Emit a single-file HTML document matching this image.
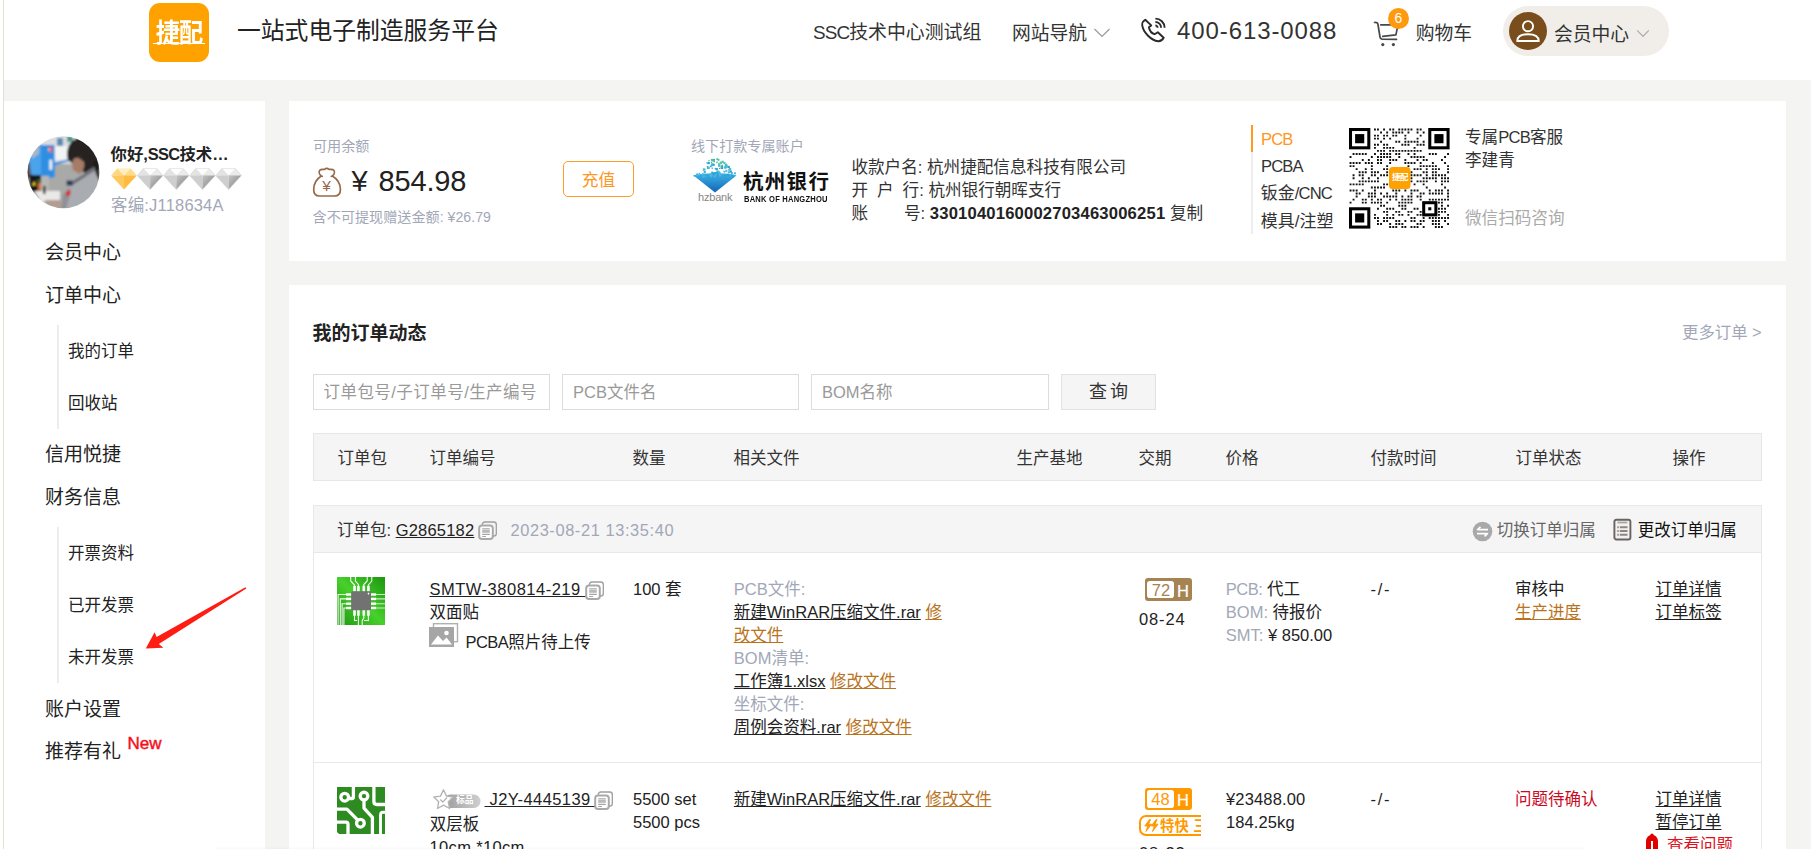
<!DOCTYPE html>
<html lang="zh-CN">
<head>
<meta charset="utf-8">
<title>会员中心 - 捷配</title>
<style>
*{box-sizing:border-box;margin:0;padding:0}
html,body{width:1811px;height:849px;overflow:hidden;background:#f4f4f2}
body{position:relative;font-family:"Liberation Sans","Noto Sans CJK SC",sans-serif;color:#222;font-size:16.5px}
.abs{position:absolute}
.t{position:absolute;white-space:nowrap;line-height:24px;height:24px}
.box{position:absolute}
u{text-underline-offset:1.400px;text-decoration-thickness:1px}
.g{color:#a2a7b7}
.br{color:#b9731c}
.red{color:#c4122f}
.or{color:#ff961e}
/* header */
#hdr{left:0;top:0;width:1811px;height:80px;background:#fff}
#lline{left:0;top:0;width:4px;height:849px;background:#fff;border-right:1px solid #e6dfd4}
#side{left:4px;top:101px;width:261px;height:748px;background:#fff}
#card1{left:289px;top:101px;width:1497px;height:160px;background:#fff}
#card2{left:289px;top:285px;width:1497px;height:564px;background:#fff}
.m1{font-size:19px;color:#222}
.m2{font-size:16.5px;color:#222}
.f16{font-size:16.5px}
.inp{position:absolute;top:374px;height:36px;border:1px solid #dcdcdc;background:#fff;font-size:16.5px;color:#999;line-height:34px;padding-left:10px;white-space:nowrap}
.th{position:absolute;top:446.200px;margin-left:.5px;font-size:16.5px;line-height:24px;color:#333;white-space:nowrap}
</style>
</head>
<body>
<div class="box" id="hdr"></div>
<div class="box" id="side"></div>
<div class="box" id="card1"></div>
<div class="box" id="card2"></div>
<div class="box" id="lline"></div>

<!-- ========== HEADER ========== -->
<div class="box" style="left:149px;top:3px;width:60px;height:59px;border-radius:11px;background:#ffa200"></div>
<div class="t" style="left:152px;top:17.800px;width:54px;text-align:center;font-size:25px;font-weight:bold;color:#fff;line-height:30px;height:30px;letter-spacing:-1px;transform:scale(.97,1.04)">捷配</div>
<div class="box" style="left:153px;top:42.500px;width:52px;height:1.500px;background:#fff"></div>
<div class="t" style="left:237px;top:17px;font-size:23.8px;line-height:28px;height:28px;color:#222">一站式电子制造服务平台</div>
<div class="t" style="left:813px;top:20.500px;font-size:18.9px;color:#333"><span style="letter-spacing:-.9px">SSC</span>技术中心测试组</div>
<div class="t" style="left:1012px;top:21.500px;font-size:18.8px;color:#333">网站导航</div>
<svg class="abs" style="left:1093px;top:26.500px" width="18" height="12" viewBox="0 0 18 12"><path d="M1.5 2 L9 9.5 L16.5 2" fill="none" stroke="#999" stroke-width="1.2"/></svg>
<svg class="abs" style="left:1140px;top:17px" width="27" height="27" viewBox="0 0 27 27"><g fill="none" stroke="#2a2a2a" stroke-width="1.900" stroke-linejoin="round"><path d="M5.300 2.700L11.200 8.400L8.900 10.300C9.500 13.500 12 16.500 14.600 17.200L17.800 15.200L23.700 20.800C22.500 23 20.500 24.300 18.200 24.200C11 23.500 3 15 2.200 8.100C2 6 3.500 3.800 5.300 2.700Z"/><path d="M15.400 1.600A9.200 9.200 0 0 1 24.600 10.700M15.400 5A5.700 5.700 0 0 1 21.100 10.700M15.400 8.500A2.200 2.200 0 0 1 17.600 10.700"/></g></svg>
<div class="t" style="left:1177px;top:16px;font-size:24px;line-height:30px;height:30px;color:#333;letter-spacing:.9px">400-613-0088</div>
<svg class="abs" style="left:1373px;top:19.500px" width="28" height="29" viewBox="0 0 28 29"><g fill="none" stroke="#484848" stroke-width="1.700" stroke-linecap="round" stroke-linejoin="round"><path d="M1.500 2.500C3.500 2.300 4.500 2.300 4.900 4L7 17C7.200 18.400 7.800 19.100 9 19.200L23.500 19.400"/><path d="M7.800 4.900H25L22.900 14.900L9.700 16.400"/></g><circle cx="9.800" cy="24.600" r="1.600" fill="#484848"/><circle cx="20.400" cy="24.600" r="1.600" fill="#484848"/></svg>
<div class="box" style="left:1388px;top:8px;width:21px;height:21px;border-radius:50%;background:#ff9a0e"></div>
<div class="t" style="left:1388px;top:8px;width:21px;text-align:center;font-size:14px;line-height:21px;height:21px;color:#fff">6</div>
<div class="t" style="left:1415.700px;top:22.200px;font-size:18.8px;color:#333">购物车</div>
<div class="box" style="left:1503px;top:6px;width:166px;height:50px;border-radius:25px;background:#f1eeea"></div>
<div class="box" style="left:1509px;top:12px;width:38px;height:38px;border-radius:50%;background:#7a4d1c"></div>
<svg class="abs" style="left:1509px;top:12px" width="38" height="38" viewBox="0 0 38 38"><g fill="none" stroke="#fff" stroke-width="1.900"><circle cx="19" cy="14.200" r="5.100"/><path d="M8.300 29 C8.300 24 12 22.200 19 22.200 C26 22.200 29.700 24 29.700 29 Z" stroke-linejoin="miter"/></g></svg>
<div class="t" style="left:1554px;top:22.900px;font-size:18.8px;color:#333">会员中心</div>
<svg class="abs" style="left:1635px;top:28px" width="16" height="11" viewBox="0 0 16 11"><path d="M2.200 2.400 L8 8.300 L13.800 2.400" fill="none" stroke="#aaa" stroke-width="1.2"/></svg>

<!-- ========== SIDEBAR ========== -->
<svg class="abs" style="left:26.400px;top:135px" width="74" height="74" viewBox="-1 -1 74 74">
<defs><clipPath id="avc"><circle cx="36.500" cy="36.200" r="36"/></clipPath><filter id="avb" x="-5%" y="-5%" width="110%" height="110%"><feGaussianBlur stdDeviation="1"/></filter></defs>
<g clip-path="url(#avc)"><g filter="url(#avb)">
<rect x="-2" y="-2" width="76" height="76" fill="#a9a9a8"/>
<rect x="14" y="-2" width="34" height="30" fill="#d9dde2"/>
<rect x="24" y="10" width="18" height="14" fill="#f2f3f5"/>
<path d="M26 27l16-4v2l-16 5z" fill="#3d8fd8"/>
<rect x="30" y="2" width="6" height="8" fill="#5a8bb0"/><rect x="40" y="0" width="6" height="6" fill="#4a9a8a"/>
<rect x="-2" y="26" width="8" height="16" fill="#5a4a48"/>
<path d="M2 22L14 9h13.500l.5 32-12.500 3L4 38z" fill="#2f8fe2"/>
<path d="M2 22L14 9v35L4 38z" fill="#4ba3ec"/>
<path d="M5 17l7-6.500v7L5 23z" fill="#a9b9c8"/>
<rect x="22.300" y="23.800" width="3" height="10" fill="#eef2f6"/>
<rect x="21.300" y="11.400" width="4.500" height="4.500" fill="#e8484a"/><rect x="21.300" y="12.800" width="2" height="1.600" fill="#fff"/>
<rect x="14" y="40" width="8" height="16" fill="#b5b5b3"/>
<rect x="2.500" y="39" width="11.500" height="16.500" fill="#16161a"/>
<path d="M4.500 49.500l3-4.500 1.500 4.500z" fill="#e8c81a"/><rect x="10.900" y="46.500" width="3" height="8" fill="#d9742a"/><circle cx="11.500" cy="44.500" r="1.100" fill="#2fae4a"/>
<path d="M8 55h25v10L14 66z" fill="#e9e9e8"/>
<rect x="16" y="50" width="2.500" height="8" fill="#333"/>
<path d="M18 64h16v9H20z" fill="#b39c92"/>
<path d="M41 24C38 12 44 2 54 2c10 0 19 10 19 24v22l-8-6-14-10z" fill="#282422"/>
<path d="M46 24c3-4 9-4 11 2 1 5-1 9-4 12l-7-4c-1-3-1-7 0-10z" fill="#a67c66"/>
<path d="M46.500 22c4-6 11-5 12 4l-3-1c-2-3-6-4-9-3z" fill="#2a2523"/>
<path d="M34 73l2-14 14-17 19-12 5 6v37z" fill="#a9acb1"/>
<path d="M41 48l27-17 1.500 2.500L44 50z" fill="#6d7076"/>
<path d="M34 73l2-14 6-7 2 3-5 18z" fill="#8e9196"/>
<rect x="39.600" y="44.500" width="6" height="5" fill="#2c3a5a"/>
<path d="M38.600 57l4-4 1 5-3.500 3z" fill="#d8262a"/>
<path d="M66 24c4 2 7 8 7 22l-4-8z" fill="#1c1816"/>
</g></g></svg>
<div class="t" style="left:110.500px;top:142px;font-size:16.4px;font-weight:bold;color:#222">你好,<span style="letter-spacing:-.7px">SSC</span>技术…</div>
<svg class="abs" style="left:111.200px;top:168px" width="134" height="23" viewBox="0 0 134 23"><defs><linearGradient id="dgr" x1="0" y1="0" x2="1" y2="1"><stop offset="0" stop-color="#c6c6c6"/><stop offset=".6" stop-color="#9a9a9a"/><stop offset="1" stop-color="#b5b5b5"/></linearGradient></defs><g transform="translate(0.0 0)"><path d="M6.500 .3L.2 7.600L13 7.200Z" fill="#ffd77c"/><path d="M19.500 .3L25.800 7.600L13 7.200Z" fill="#ffdc8a"/><path d="M6.500 .3H19.500L13 7.200Z" fill="#ffeec4"/><path d="M.2 7.600L13 7.200V21.600Z" fill="#ffc95f"/><path d="M25.800 7.600L13 7.200V21.600Z" fill="#ffbc40"/></g><g transform="translate(26.15 0)"><path d="M6.500 .3L.2 7.600L13 7.200Z" fill="#e3e3e3"/><path d="M19.500 .3L25.800 7.600L13 7.200Z" fill="#ebebeb"/><path d="M6.500 .3H19.500L13 7.200Z" fill="#fdfdfd"/><path d="M.2 7.600L13 7.200V21.600Z" fill="#cecece"/><path d="M25.800 7.600L13 7.200V21.600Z" fill="url(#dgr)"/><path d="M6.500 .3H19.500L25.800 7.600L13 21.600L.2 7.600Z" fill="none" stroke="#d2d2d2" stroke-width=".6"/></g><g transform="translate(52.3 0)"><path d="M6.500 .3L.2 7.600L13 7.200Z" fill="#e3e3e3"/><path d="M19.500 .3L25.800 7.600L13 7.200Z" fill="#ebebeb"/><path d="M6.500 .3H19.500L13 7.200Z" fill="#fdfdfd"/><path d="M.2 7.600L13 7.200V21.600Z" fill="#cecece"/><path d="M25.800 7.600L13 7.200V21.600Z" fill="url(#dgr)"/><path d="M6.500 .3H19.500L25.800 7.600L13 21.600L.2 7.600Z" fill="none" stroke="#d2d2d2" stroke-width=".6"/></g><g transform="translate(78.45 0)"><path d="M6.500 .3L.2 7.600L13 7.200Z" fill="#e3e3e3"/><path d="M19.500 .3L25.800 7.600L13 7.200Z" fill="#ebebeb"/><path d="M6.500 .3H19.500L13 7.200Z" fill="#fdfdfd"/><path d="M.2 7.600L13 7.200V21.600Z" fill="#cecece"/><path d="M25.800 7.600L13 7.200V21.600Z" fill="url(#dgr)"/><path d="M6.500 .3H19.500L25.800 7.600L13 21.600L.2 7.600Z" fill="none" stroke="#d2d2d2" stroke-width=".6"/></g><g transform="translate(104.6 0)"><path d="M6.500 .3L.2 7.600L13 7.200Z" fill="#e3e3e3"/><path d="M19.500 .3L25.800 7.600L13 7.200Z" fill="#ebebeb"/><path d="M6.500 .3H19.500L13 7.200Z" fill="#fdfdfd"/><path d="M.2 7.600L13 7.200V21.600Z" fill="#cecece"/><path d="M25.800 7.600L13 7.200V21.600Z" fill="url(#dgr)"/><path d="M6.500 .3H19.500L25.800 7.600L13 21.600L.2 7.600Z" fill="none" stroke="#d2d2d2" stroke-width=".6"/></g></svg>
<div class="t g" style="left:111px;top:193.300px;font-size:16.5px;letter-spacing:.18px">客编:J118634A</div>
<div class="t m1" style="left:45px;top:241px">会员中心</div>
<div class="t m1" style="left:45px;top:284px">订单中心</div>
<div class="box" style="left:57px;top:325px;width:2px;height:104px;background:#ededed"></div>
<div class="t m2" style="left:68px;top:339px">我的订单</div>
<div class="t m2" style="left:68px;top:391px">回收站</div>
<div class="t m1" style="left:45px;top:442.500px">信用悦捷</div>
<div class="t m1" style="left:45px;top:485.500px">财务信息</div>
<div class="box" style="left:57px;top:527px;width:2px;height:156px;background:#ededed"></div>
<div class="t m2" style="left:68px;top:541px">开票资料</div>
<div class="t m2" style="left:68px;top:593px">已开发票</div>
<div class="t m2" style="left:68px;top:645px">未开发票</div>
<svg class="abs" style="left:140px;top:582px" width="112" height="72" viewBox="140 582 112 72"><path d="M246.300 588.500 L245.400 587.300 L156.600 637.100 L154.600 632.200 L145.800 648.400 L163.400 647.700 L158.800 644.100 Z" fill="#ff1c12"/></svg>
<div class="t m1" style="left:45px;top:697.500px">账户设置</div>
<div class="t m1" style="left:45px;top:739.800px">推荐有礼</div>
<div class="t" style="left:127.500px;top:731.500px;font-size:17px;color:#f5101c;-webkit-text-stroke:.45px #f5101c">New</div>

<!-- ========== CARD1 ========== -->
<div class="t g" style="left:313px;top:134px;font-size:14.1px">可用余额</div>
<svg class="abs" style="left:312px;top:167px" width="30" height="31" viewBox="0 0 30 31"><path d="M10.300 9.300L9.300 9C7.500 7.500 6.400 5 7.800 3.200C9 1.800 11.500 2.700 12.800 2.200C13.800 1.100 15.800 1.100 16.800 2.200C18.100 2.700 20.600 1.800 21.800 3.200C23.200 5 22.100 7.500 20.300 9L19.300 9.300M20.300 9C25.500 12 28.400 17.500 28.400 22.500C28.400 27 26 29 22.500 29L7.500 29C4 29 1.700 27 1.700 22.500C1.700 17.500 4.500 12 9.300 9" fill="none" stroke="#96684a" stroke-width="1.700" stroke-linejoin="round" stroke-linecap="round"/></svg>
<div class="t" style="left:318.500px;top:177.500px;width:16px;text-align:center;font-size:15.500px;line-height:16px;height:16px;color:#96684a">¥</div>
<div class="t" style="left:351.500px;top:163px;font-size:29px;line-height:36px;height:36px;color:#222">¥</div><div class="t" style="left:378.500px;top:163px;font-size:29px;line-height:36px;height:36px;color:#222;letter-spacing:-.15px">854.98</div>
<div class="t g" style="left:312.500px;top:205px;font-size:14.15px">含不可提现赠送金额: ¥26.79</div>
<div class="box" style="left:563px;top:161px;width:71px;height:36px;border:1.400px solid #ff9d2b;border-radius:5px"></div>
<div class="t or" style="left:563px;top:169px;width:71px;text-align:center;font-size:16.800px">充值</div>
<div class="t g" style="left:691px;top:134px;font-size:14.1px">线下打款专属账户</div>
<svg class="abs" style="left:692px;top:157px" width="46" height="37" viewBox="0 0 46 37"><defs><linearGradient id="hzg" x1="0" y1="0" x2="0" y2="1"><stop offset="0" stop-color="#3cb4e4"/><stop offset="1" stop-color="#1464b8"/></linearGradient></defs><path d="M1.500 18.500C8 15.500 38 15.500 44.500 18.500L23 35.500z" fill="url(#hzg)"/><rect x="32.1" y="9.5" width="2.2" height="2.2" fill="#4db8e6"/><rect x="29.6" y="3.7" width="2.2" height="2.2" fill="#59c6a8"/><rect x="26.4" y="14.6" width="2.0" height="2.0" fill="#4db8e6"/><rect x="36.2" y="11.7" width="2.2" height="2.2" fill="#59c6a8"/><rect x="20.8" y="15.4" width="1.6" height="1.6" fill="#2aa3d9"/><rect x="31.3" y="4.9" width="2.2" height="2.2" fill="#59c6a8"/><rect x="26.0" y="16.0" width="2.2" height="2.2" fill="#4db8e6"/><rect x="38.5" y="17.7" width="1.6" height="1.6" fill="#2aa3d9"/><rect x="10.9" y="11.3" width="1.6" height="1.6" fill="#4db8e6"/><rect x="25.5" y="1.8" width="2.0" height="2.0" fill="#59c6a8"/><rect x="14.4" y="5.2" width="1.3" height="1.3" fill="#2aa3d9"/><rect x="32.8" y="6.6" width="2.2" height="2.2" fill="#4db8e6"/><rect x="30.5" y="16.6" width="1.3" height="1.3" fill="#4db8e6"/><rect x="28.6" y="8.8" width="1.6" height="1.6" fill="#3fb58f"/><rect x="19.6" y="6.5" width="2.2" height="2.2" fill="#3fb58f"/><rect x="11.6" y="11.6" width="2.0" height="2.0" fill="#4db8e6"/><rect x="31.4" y="13.7" width="1.3" height="1.3" fill="#4db8e6"/><rect x="26.0" y="7.6" width="2.0" height="2.0" fill="#3fb58f"/><rect x="30.7" y="18.1" width="1.6" height="1.6" fill="#4db8e6"/><rect x="26.3" y="7.1" width="2.2" height="2.2" fill="#4db8e6"/><rect x="14.8" y="18.2" width="1.6" height="1.6" fill="#2aa3d9"/><rect x="37.8" y="13.5" width="2.2" height="2.2" fill="#2aa3d9"/><rect x="19.6" y="2.1" width="1.3" height="1.3" fill="#59c6a8"/><rect x="39.2" y="15.3" width="1.6" height="1.6" fill="#2aa3d9"/><rect x="4.5" y="16.5" width="2.0" height="2.0" fill="#4db8e6"/><rect x="20.9" y="1.9" width="1.3" height="1.3" fill="#59c6a8"/><rect x="19.0" y="6.7" width="2.0" height="2.0" fill="#2aa3d9"/><rect x="27.0" y="10.7" width="1.3" height="1.3" fill="#3fb58f"/><rect x="28.7" y="9.9" width="2.2" height="2.2" fill="#3fb58f"/><rect x="18.9" y="4.9" width="1.3" height="1.3" fill="#3fb58f"/><rect x="35.7" y="14.2" width="2.2" height="2.2" fill="#4db8e6"/><rect x="20.9" y="2.1" width="1.6" height="1.6" fill="#3fb58f"/><rect x="37.0" y="11.0" width="2.2" height="2.2" fill="#4db8e6"/><rect x="11.7" y="13.9" width="2.0" height="2.0" fill="#2aa3d9"/><rect x="38.3" y="17.8" width="2.0" height="2.0" fill="#4db8e6"/><rect x="24.2" y="4.6" width="1.6" height="1.6" fill="#59c6a8"/><rect x="22.1" y="18.8" width="1.6" height="1.6" fill="#4db8e6"/><rect x="21.5" y="18.3" width="1.6" height="1.6" fill="#4db8e6"/><rect x="19.5" y="2.2" width="2.0" height="2.0" fill="#3fb58f"/><rect x="15.0" y="9.7" width="2.2" height="2.2" fill="#2aa3d9"/><rect x="26.3" y="5.9" width="1.3" height="1.3" fill="#3fb58f"/><rect x="33.3" y="12.8" width="2.0" height="2.0" fill="#4db8e6"/><rect x="23.8" y="11.2" width="2.2" height="2.2" fill="#2aa3d9"/><rect x="31.8" y="14.1" width="1.6" height="1.6" fill="#4db8e6"/><rect x="18.0" y="8.6" width="1.6" height="1.6" fill="#2aa3d9"/><rect x="4.0" y="16.7" width="2.0" height="2.0" fill="#4db8e6"/><rect x="20.9" y="7.0" width="1.3" height="1.3" fill="#4db8e6"/><rect x="15.1" y="5.9" width="1.3" height="1.3" fill="#59c6a8"/><rect x="25.4" y="13.6" width="2.2" height="2.2" fill="#59c6a8"/><rect x="21.4" y="3.6" width="1.6" height="1.6" fill="#3fb58f"/><rect x="17.6" y="16.6" width="2.0" height="2.0" fill="#4db8e6"/><rect x="17.8" y="18.1" width="2.0" height="2.0" fill="#4db8e6"/><rect x="21.3" y="1.9" width="1.6" height="1.6" fill="#3fb58f"/><rect x="38.7" y="17.8" width="2.2" height="2.2" fill="#2aa3d9"/><rect x="19.5" y="15.2" width="1.6" height="1.6" fill="#2aa3d9"/><rect x="19.3" y="14.6" width="1.6" height="1.6" fill="#2aa3d9"/><rect x="20.9" y="16.3" width="2.0" height="2.0" fill="#2aa3d9"/><rect x="28.0" y="4.8" width="1.6" height="1.6" fill="#3fb58f"/><rect x="14.8" y="9.0" width="1.3" height="1.3" fill="#2aa3d9"/><rect x="15.7" y="4.9" width="2.2" height="2.2" fill="#2aa3d9"/><rect x="27.0" y="17.4" width="2.0" height="2.0" fill="#4db8e6"/><rect x="14.3" y="17.8" width="1.6" height="1.6" fill="#2aa3d9"/><rect x="14.6" y="18.9" width="1.3" height="1.3" fill="#4db8e6"/><rect x="39.2" y="15.5" width="1.3" height="1.3" fill="#4db8e6"/><rect x="33.8" y="8.1" width="1.6" height="1.6" fill="#3fb58f"/><rect x="25.1" y="16.0" width="1.6" height="1.6" fill="#2aa3d9"/><rect x="22.3" y="15.0" width="2.0" height="2.0" fill="#2aa3d9"/><rect x="31.5" y="17.5" width="2.2" height="2.2" fill="#2aa3d9"/><rect x="6.8" y="15.8" width="1.3" height="1.3" fill="#4db8e6"/><rect x="18.8" y="7.1" width="2.2" height="2.2" fill="#4db8e6"/><rect x="18.9" y="1.9" width="1.6" height="1.6" fill="#3fb58f"/><rect x="10.5" y="18.4" width="2.2" height="2.2" fill="#4db8e6"/><rect x="34.8" y="16.9" width="2.2" height="2.2" fill="#2aa3d9"/><rect x="16.3" y="3.0" width="1.3" height="1.3" fill="#59c6a8"/><rect x="29.6" y="7.6" width="1.3" height="1.3" fill="#3fb58f"/><rect x="15.4" y="18.9" width="2.2" height="2.2" fill="#2aa3d9"/><rect x="12.2" y="14.5" width="1.6" height="1.6" fill="#59c6a8"/><rect x="24.6" y="17.8" width="2.2" height="2.2" fill="#2aa3d9"/><rect x="32.7" y="8.4" width="2.2" height="2.2" fill="#2aa3d9"/><rect x="1.6" y="18.2" width="1.3" height="1.3" fill="#2aa3d9"/><rect x="40.0" y="18.6" width="2.0" height="2.0" fill="#2aa3d9"/><rect x="36.5" y="9.5" width="1.6" height="1.6" fill="#4db8e6"/><rect x="33.3" y="9.3" width="2.0" height="2.0" fill="#59c6a8"/><rect x="24.4" y="1.3" width="1.6" height="1.6" fill="#3fb58f"/><rect x="27.7" y="4.7" width="2.2" height="2.2" fill="#59c6a8"/><rect x="22.7" y="10.9" width="1.6" height="1.6" fill="#2aa3d9"/><rect x="29.2" y="10.0" width="2.0" height="2.0" fill="#2aa3d9"/><rect x="29.2" y="8.4" width="2.0" height="2.0" fill="#3fb58f"/><rect x="27.0" y="15.7" width="2.2" height="2.2" fill="#4db8e6"/><rect x="21.2" y="15.5" width="1.6" height="1.6" fill="#2aa3d9"/><rect x="15.6" y="9.7" width="2.2" height="2.2" fill="#59c6a8"/><rect x="29.4" y="18.3" width="1.6" height="1.6" fill="#2aa3d9"/><rect x="18.5" y="17.9" width="1.3" height="1.3" fill="#4db8e6"/><rect x="20.7" y="6.7" width="2.0" height="2.0" fill="#2aa3d9"/><rect x="22.8" y="17.2" width="1.6" height="1.6" fill="#4db8e6"/><rect x="10.7" y="12.4" width="1.3" height="1.3" fill="#59c6a8"/><rect x="35.4" y="8.8" width="2.2" height="2.2" fill="#2aa3d9"/><rect x="19.6" y="10.6" width="1.3" height="1.3" fill="#2aa3d9"/><rect x="19.1" y="2.4" width="2.0" height="2.0" fill="#59c6a8"/><rect x="33.3" y="7.4" width="2.2" height="2.2" fill="#4db8e6"/><rect x="24.1" y="14.3" width="2.2" height="2.2" fill="#2aa3d9"/><rect x="10.0" y="16.3" width="1.6" height="1.6" fill="#4db8e6"/><rect x="42.0" y="15.3" width="2.0" height="2.0" fill="#4db8e6"/></svg>
<div class="t" style="left:698px;top:190px;font-size:11px;line-height:14px;height:14px;color:#858585;letter-spacing:-.2px">hzbank</div>
<div class="t" style="left:743px;top:168.400px;font-size:20.500px;font-weight:bold;line-height:28px;height:28px;color:#111;letter-spacing:1.300px">杭州银行</div>
<div class="t" style="left:743.500px;top:193.500px;font-size:8.600px;font-weight:bold;line-height:11px;height:11px;color:#111;letter-spacing:.25px;transform-origin:left center;transform:scaleX(.88)">BANK OF HANGZHOU</div>
<div class="t" style="left:851.400px;top:156.400px;font-size:16.600px;color:#333">收款户名: 杭州捷配信息科技有限公司</div>
<div class="t" style="left:851.400px;top:179.400px;font-size:16.600px;color:#333">开<span style="display:inline-block;width:9px"></span>户<span style="display:inline-block;width:9px"></span>行: 杭州银行朝晖支行</div>
<div class="t" style="left:851.400px;top:202.400px;font-size:16.600px;color:#333">账</div>
<div class="t" style="left:904px;top:202.400px;font-size:16.600px;color:#333">号: <b style="color:#222;letter-spacing:.19px">3301040160002703463006251</b> 复制</div>
<div class="box" style="left:1251px;top:125px;width:2px;height:109px;background:#eee"></div>
<div class="box" style="left:1251px;top:125px;width:2px;height:27px;background:#ff9a1e"></div>
<div class="t or" style="left:1261px;top:128px;font-size:16.600px;letter-spacing:-.9px">PCB</div>
<div class="t" style="left:1261px;top:155.200px;font-size:16.600px;color:#333;letter-spacing:-.9px">PCBA</div>
<div class="t" style="left:1260.700px;top:182.300px;font-size:17px;color:#333">钣金<span style="letter-spacing:-.8px;font-size:16.600px">/CNC</span></div>
<div class="t" style="left:1260.700px;top:209.500px;font-size:17px;color:#333">模具/注塑</div>
<svg class="abs" style="left:1349px;top:128px" width="101" height="101" viewBox="0 0 101 101"><rect x="1.52" y="1.52" width="18.29" height="18.29" fill="none" stroke="#000" stroke-width="3.05"/><rect x="6.10" y="6.10" width="9.15" height="9.15" fill="#000"/><rect x="80.78" y="1.52" width="18.29" height="18.29" fill="none" stroke="#000" stroke-width="3.05"/><rect x="85.36" y="6.10" width="9.15" height="9.15" fill="#000"/><rect x="1.52" y="80.78" width="18.29" height="18.29" fill="none" stroke="#000" stroke-width="3.05"/><rect x="6.10" y="85.36" width="9.15" height="9.15" fill="#000"/><rect x="74.69" y="74.69" width="12.19" height="12.19" fill="none" stroke="#000" stroke-width="3.05"/><rect x="79.26" y="79.26" width="3.05" height="3.05" fill="#000"/><path d="M25.0 0.6h1.9v1.9h-1.9zM28.0 0.6h1.9v1.9h-1.9zM34.1 0.6h1.9v1.9h-1.9zM40.2 0.6h1.9v1.9h-1.9zM43.3 0.6h1.9v1.9h-1.9zM49.3 0.6h1.9v1.9h-1.9zM52.4 0.6h1.9v1.9h-1.9zM55.4 0.6h1.9v1.9h-1.9zM58.5 0.6h1.9v1.9h-1.9zM61.5 0.6h1.9v1.9h-1.9zM67.6 0.6h1.9v1.9h-1.9zM70.7 0.6h1.9v1.9h-1.9zM31.1 3.6h1.9v1.9h-1.9zM37.2 3.6h1.9v1.9h-1.9zM43.3 3.6h1.9v1.9h-1.9zM46.3 3.6h1.9v1.9h-1.9zM49.3 3.6h1.9v1.9h-1.9zM52.4 3.6h1.9v1.9h-1.9zM58.5 3.6h1.9v1.9h-1.9zM67.6 3.6h1.9v1.9h-1.9zM73.7 3.6h1.9v1.9h-1.9zM25.0 6.7h1.9v1.9h-1.9zM28.0 6.7h1.9v1.9h-1.9zM34.1 6.7h1.9v1.9h-1.9zM37.2 6.7h1.9v1.9h-1.9zM43.3 6.7h1.9v1.9h-1.9zM46.3 6.7h1.9v1.9h-1.9zM55.4 6.7h1.9v1.9h-1.9zM70.7 6.7h1.9v1.9h-1.9zM25.0 9.7h1.9v1.9h-1.9zM28.0 9.7h1.9v1.9h-1.9zM34.1 9.7h1.9v1.9h-1.9zM40.2 9.7h1.9v1.9h-1.9zM55.4 9.7h1.9v1.9h-1.9zM67.6 9.7h1.9v1.9h-1.9zM31.1 12.8h1.9v1.9h-1.9zM46.3 12.8h1.9v1.9h-1.9zM49.3 12.8h1.9v1.9h-1.9zM55.4 12.8h1.9v1.9h-1.9zM58.5 12.8h1.9v1.9h-1.9zM61.5 12.8h1.9v1.9h-1.9zM64.6 12.8h1.9v1.9h-1.9zM67.6 12.8h1.9v1.9h-1.9zM73.7 12.8h1.9v1.9h-1.9zM25.0 15.8h1.9v1.9h-1.9zM28.0 15.8h1.9v1.9h-1.9zM34.1 15.8h1.9v1.9h-1.9zM37.2 15.8h1.9v1.9h-1.9zM52.4 15.8h1.9v1.9h-1.9zM55.4 15.8h1.9v1.9h-1.9zM58.5 15.8h1.9v1.9h-1.9zM67.6 15.8h1.9v1.9h-1.9zM70.7 15.8h1.9v1.9h-1.9zM73.7 15.8h1.9v1.9h-1.9zM25.0 18.9h1.9v1.9h-1.9zM34.1 18.9h1.9v1.9h-1.9zM37.2 18.9h1.9v1.9h-1.9zM40.2 18.9h1.9v1.9h-1.9zM43.3 18.9h1.9v1.9h-1.9zM64.6 18.9h1.9v1.9h-1.9zM28.0 21.9h1.9v1.9h-1.9zM31.1 21.9h1.9v1.9h-1.9zM34.1 21.9h1.9v1.9h-1.9zM40.2 21.9h1.9v1.9h-1.9zM43.3 21.9h1.9v1.9h-1.9zM46.3 21.9h1.9v1.9h-1.9zM49.3 21.9h1.9v1.9h-1.9zM52.4 21.9h1.9v1.9h-1.9zM55.4 21.9h1.9v1.9h-1.9zM58.5 21.9h1.9v1.9h-1.9zM61.5 21.9h1.9v1.9h-1.9zM64.6 21.9h1.9v1.9h-1.9zM67.6 21.9h1.9v1.9h-1.9zM70.7 21.9h1.9v1.9h-1.9zM3.6 25.0h1.9v1.9h-1.9zM6.7 25.0h1.9v1.9h-1.9zM9.7 25.0h1.9v1.9h-1.9zM12.8 25.0h1.9v1.9h-1.9zM15.8 25.0h1.9v1.9h-1.9zM25.0 25.0h1.9v1.9h-1.9zM31.1 25.0h1.9v1.9h-1.9zM34.1 25.0h1.9v1.9h-1.9zM37.2 25.0h1.9v1.9h-1.9zM40.2 25.0h1.9v1.9h-1.9zM46.3 25.0h1.9v1.9h-1.9zM49.3 25.0h1.9v1.9h-1.9zM58.5 25.0h1.9v1.9h-1.9zM64.6 25.0h1.9v1.9h-1.9zM79.8 25.0h1.9v1.9h-1.9zM82.9 25.0h1.9v1.9h-1.9zM85.9 25.0h1.9v1.9h-1.9zM98.1 25.0h1.9v1.9h-1.9zM0.6 28.0h1.9v1.9h-1.9zM21.9 28.0h1.9v1.9h-1.9zM28.0 28.0h1.9v1.9h-1.9zM31.1 28.0h1.9v1.9h-1.9zM34.1 28.0h1.9v1.9h-1.9zM37.2 28.0h1.9v1.9h-1.9zM40.2 28.0h1.9v1.9h-1.9zM49.3 28.0h1.9v1.9h-1.9zM61.5 28.0h1.9v1.9h-1.9zM64.6 28.0h1.9v1.9h-1.9zM67.6 28.0h1.9v1.9h-1.9zM70.7 28.0h1.9v1.9h-1.9zM73.7 28.0h1.9v1.9h-1.9zM95.1 28.0h1.9v1.9h-1.9zM12.8 31.1h1.9v1.9h-1.9zM18.9 31.1h1.9v1.9h-1.9zM28.0 31.1h1.9v1.9h-1.9zM31.1 31.1h1.9v1.9h-1.9zM40.2 31.1h1.9v1.9h-1.9zM43.3 31.1h1.9v1.9h-1.9zM46.3 31.1h1.9v1.9h-1.9zM55.4 31.1h1.9v1.9h-1.9zM67.6 31.1h1.9v1.9h-1.9zM73.7 31.1h1.9v1.9h-1.9zM76.8 31.1h1.9v1.9h-1.9zM92.0 31.1h1.9v1.9h-1.9zM0.6 34.1h1.9v1.9h-1.9zM3.6 34.1h1.9v1.9h-1.9zM6.7 34.1h1.9v1.9h-1.9zM9.7 34.1h1.9v1.9h-1.9zM15.8 34.1h1.9v1.9h-1.9zM18.9 34.1h1.9v1.9h-1.9zM21.9 34.1h1.9v1.9h-1.9zM28.0 34.1h1.9v1.9h-1.9zM31.1 34.1h1.9v1.9h-1.9zM40.2 34.1h1.9v1.9h-1.9zM55.4 34.1h1.9v1.9h-1.9zM58.5 34.1h1.9v1.9h-1.9zM61.5 34.1h1.9v1.9h-1.9zM64.6 34.1h1.9v1.9h-1.9zM70.7 34.1h1.9v1.9h-1.9zM82.9 34.1h1.9v1.9h-1.9zM95.1 34.1h1.9v1.9h-1.9zM0.6 37.2h1.9v1.9h-1.9zM3.6 37.2h1.9v1.9h-1.9zM21.9 37.2h1.9v1.9h-1.9zM37.2 37.2h1.9v1.9h-1.9zM58.5 37.2h1.9v1.9h-1.9zM70.7 37.2h1.9v1.9h-1.9zM73.7 37.2h1.9v1.9h-1.9zM76.8 37.2h1.9v1.9h-1.9zM79.8 37.2h1.9v1.9h-1.9zM82.9 37.2h1.9v1.9h-1.9zM85.9 37.2h1.9v1.9h-1.9zM98.1 37.2h1.9v1.9h-1.9zM6.7 40.2h1.9v1.9h-1.9zM15.8 40.2h1.9v1.9h-1.9zM21.9 40.2h1.9v1.9h-1.9zM34.1 40.2h1.9v1.9h-1.9zM37.2 40.2h1.9v1.9h-1.9zM64.6 40.2h1.9v1.9h-1.9zM67.6 40.2h1.9v1.9h-1.9zM70.7 40.2h1.9v1.9h-1.9zM76.8 40.2h1.9v1.9h-1.9zM82.9 40.2h1.9v1.9h-1.9zM85.9 40.2h1.9v1.9h-1.9zM89.0 40.2h1.9v1.9h-1.9zM98.1 40.2h1.9v1.9h-1.9zM9.7 43.3h1.9v1.9h-1.9zM12.8 43.3h1.9v1.9h-1.9zM15.8 43.3h1.9v1.9h-1.9zM21.9 43.3h1.9v1.9h-1.9zM25.0 43.3h1.9v1.9h-1.9zM28.0 43.3h1.9v1.9h-1.9zM37.2 43.3h1.9v1.9h-1.9zM61.5 43.3h1.9v1.9h-1.9zM73.7 43.3h1.9v1.9h-1.9zM76.8 43.3h1.9v1.9h-1.9zM82.9 43.3h1.9v1.9h-1.9zM85.9 43.3h1.9v1.9h-1.9zM98.1 43.3h1.9v1.9h-1.9zM3.6 46.3h1.9v1.9h-1.9zM9.7 46.3h1.9v1.9h-1.9zM12.8 46.3h1.9v1.9h-1.9zM21.9 46.3h1.9v1.9h-1.9zM25.0 46.3h1.9v1.9h-1.9zM31.1 46.3h1.9v1.9h-1.9zM34.1 46.3h1.9v1.9h-1.9zM37.2 46.3h1.9v1.9h-1.9zM61.5 46.3h1.9v1.9h-1.9zM64.6 46.3h1.9v1.9h-1.9zM67.6 46.3h1.9v1.9h-1.9zM70.7 46.3h1.9v1.9h-1.9zM76.8 46.3h1.9v1.9h-1.9zM82.9 46.3h1.9v1.9h-1.9zM85.9 46.3h1.9v1.9h-1.9zM89.0 46.3h1.9v1.9h-1.9zM92.0 46.3h1.9v1.9h-1.9zM95.1 46.3h1.9v1.9h-1.9zM3.6 49.3h1.9v1.9h-1.9zM12.8 49.3h1.9v1.9h-1.9zM18.9 49.3h1.9v1.9h-1.9zM28.0 49.3h1.9v1.9h-1.9zM61.5 49.3h1.9v1.9h-1.9zM73.7 49.3h1.9v1.9h-1.9zM76.8 49.3h1.9v1.9h-1.9zM79.8 49.3h1.9v1.9h-1.9zM82.9 49.3h1.9v1.9h-1.9zM85.9 49.3h1.9v1.9h-1.9zM92.0 49.3h1.9v1.9h-1.9zM95.1 49.3h1.9v1.9h-1.9zM98.1 49.3h1.9v1.9h-1.9zM9.7 52.4h1.9v1.9h-1.9zM12.8 52.4h1.9v1.9h-1.9zM15.8 52.4h1.9v1.9h-1.9zM18.9 52.4h1.9v1.9h-1.9zM21.9 52.4h1.9v1.9h-1.9zM25.0 52.4h1.9v1.9h-1.9zM28.0 52.4h1.9v1.9h-1.9zM61.5 52.4h1.9v1.9h-1.9zM67.6 52.4h1.9v1.9h-1.9zM70.7 52.4h1.9v1.9h-1.9zM73.7 52.4h1.9v1.9h-1.9zM76.8 52.4h1.9v1.9h-1.9zM85.9 52.4h1.9v1.9h-1.9zM92.0 52.4h1.9v1.9h-1.9zM95.1 52.4h1.9v1.9h-1.9zM98.1 52.4h1.9v1.9h-1.9zM0.6 55.4h1.9v1.9h-1.9zM3.6 55.4h1.9v1.9h-1.9zM6.7 55.4h1.9v1.9h-1.9zM9.7 55.4h1.9v1.9h-1.9zM12.8 55.4h1.9v1.9h-1.9zM34.1 55.4h1.9v1.9h-1.9zM37.2 55.4h1.9v1.9h-1.9zM64.6 55.4h1.9v1.9h-1.9zM73.7 55.4h1.9v1.9h-1.9zM92.0 55.4h1.9v1.9h-1.9zM21.9 58.5h1.9v1.9h-1.9zM25.0 58.5h1.9v1.9h-1.9zM28.0 58.5h1.9v1.9h-1.9zM31.1 58.5h1.9v1.9h-1.9zM34.1 58.5h1.9v1.9h-1.9zM76.8 58.5h1.9v1.9h-1.9zM95.1 58.5h1.9v1.9h-1.9zM0.6 61.5h1.9v1.9h-1.9zM3.6 61.5h1.9v1.9h-1.9zM6.7 61.5h1.9v1.9h-1.9zM12.8 61.5h1.9v1.9h-1.9zM25.0 61.5h1.9v1.9h-1.9zM43.3 61.5h1.9v1.9h-1.9zM46.3 61.5h1.9v1.9h-1.9zM49.3 61.5h1.9v1.9h-1.9zM55.4 61.5h1.9v1.9h-1.9zM61.5 61.5h1.9v1.9h-1.9zM64.6 61.5h1.9v1.9h-1.9zM67.6 61.5h1.9v1.9h-1.9zM79.8 61.5h1.9v1.9h-1.9zM85.9 61.5h1.9v1.9h-1.9zM89.0 61.5h1.9v1.9h-1.9zM92.0 61.5h1.9v1.9h-1.9zM98.1 61.5h1.9v1.9h-1.9zM6.7 64.6h1.9v1.9h-1.9zM9.7 64.6h1.9v1.9h-1.9zM18.9 64.6h1.9v1.9h-1.9zM21.9 64.6h1.9v1.9h-1.9zM25.0 64.6h1.9v1.9h-1.9zM31.1 64.6h1.9v1.9h-1.9zM37.2 64.6h1.9v1.9h-1.9zM46.3 64.6h1.9v1.9h-1.9zM61.5 64.6h1.9v1.9h-1.9zM70.7 64.6h1.9v1.9h-1.9zM73.7 64.6h1.9v1.9h-1.9zM79.8 64.6h1.9v1.9h-1.9zM82.9 64.6h1.9v1.9h-1.9zM85.9 64.6h1.9v1.9h-1.9zM89.0 64.6h1.9v1.9h-1.9zM92.0 64.6h1.9v1.9h-1.9zM98.1 64.6h1.9v1.9h-1.9zM6.7 67.6h1.9v1.9h-1.9zM18.9 67.6h1.9v1.9h-1.9zM21.9 67.6h1.9v1.9h-1.9zM25.0 67.6h1.9v1.9h-1.9zM34.1 67.6h1.9v1.9h-1.9zM37.2 67.6h1.9v1.9h-1.9zM40.2 67.6h1.9v1.9h-1.9zM43.3 67.6h1.9v1.9h-1.9zM46.3 67.6h1.9v1.9h-1.9zM52.4 67.6h1.9v1.9h-1.9zM58.5 67.6h1.9v1.9h-1.9zM61.5 67.6h1.9v1.9h-1.9zM67.6 67.6h1.9v1.9h-1.9zM70.7 67.6h1.9v1.9h-1.9zM98.1 67.6h1.9v1.9h-1.9zM3.6 70.7h1.9v1.9h-1.9zM12.8 70.7h1.9v1.9h-1.9zM15.8 70.7h1.9v1.9h-1.9zM21.9 70.7h1.9v1.9h-1.9zM28.0 70.7h1.9v1.9h-1.9zM31.1 70.7h1.9v1.9h-1.9zM40.2 70.7h1.9v1.9h-1.9zM46.3 70.7h1.9v1.9h-1.9zM52.4 70.7h1.9v1.9h-1.9zM55.4 70.7h1.9v1.9h-1.9zM58.5 70.7h1.9v1.9h-1.9zM61.5 70.7h1.9v1.9h-1.9zM70.7 70.7h1.9v1.9h-1.9zM79.8 70.7h1.9v1.9h-1.9zM82.9 70.7h1.9v1.9h-1.9zM85.9 70.7h1.9v1.9h-1.9zM89.0 70.7h1.9v1.9h-1.9zM92.0 70.7h1.9v1.9h-1.9zM95.1 70.7h1.9v1.9h-1.9zM98.1 70.7h1.9v1.9h-1.9zM0.6 73.7h1.9v1.9h-1.9zM12.8 73.7h1.9v1.9h-1.9zM15.8 73.7h1.9v1.9h-1.9zM21.9 73.7h1.9v1.9h-1.9zM25.0 73.7h1.9v1.9h-1.9zM28.0 73.7h1.9v1.9h-1.9zM31.1 73.7h1.9v1.9h-1.9zM37.2 73.7h1.9v1.9h-1.9zM49.3 73.7h1.9v1.9h-1.9zM52.4 73.7h1.9v1.9h-1.9zM55.4 73.7h1.9v1.9h-1.9zM58.5 73.7h1.9v1.9h-1.9zM61.5 73.7h1.9v1.9h-1.9zM89.0 73.7h1.9v1.9h-1.9zM92.0 73.7h1.9v1.9h-1.9zM31.1 76.8h1.9v1.9h-1.9zM34.1 76.8h1.9v1.9h-1.9zM49.3 76.8h1.9v1.9h-1.9zM52.4 76.8h1.9v1.9h-1.9zM55.4 76.8h1.9v1.9h-1.9zM92.0 76.8h1.9v1.9h-1.9zM98.1 76.8h1.9v1.9h-1.9zM28.0 79.8h1.9v1.9h-1.9zM37.2 79.8h1.9v1.9h-1.9zM40.2 79.8h1.9v1.9h-1.9zM43.3 79.8h1.9v1.9h-1.9zM52.4 79.8h1.9v1.9h-1.9zM55.4 79.8h1.9v1.9h-1.9zM64.6 79.8h1.9v1.9h-1.9zM67.6 79.8h1.9v1.9h-1.9zM89.0 79.8h1.9v1.9h-1.9zM92.0 79.8h1.9v1.9h-1.9zM95.1 79.8h1.9v1.9h-1.9zM34.1 82.9h1.9v1.9h-1.9zM37.2 82.9h1.9v1.9h-1.9zM46.3 82.9h1.9v1.9h-1.9zM49.3 82.9h1.9v1.9h-1.9zM58.5 82.9h1.9v1.9h-1.9zM61.5 82.9h1.9v1.9h-1.9zM70.7 82.9h1.9v1.9h-1.9zM89.0 82.9h1.9v1.9h-1.9zM92.0 82.9h1.9v1.9h-1.9zM95.1 82.9h1.9v1.9h-1.9zM25.0 85.9h1.9v1.9h-1.9zM37.2 85.9h1.9v1.9h-1.9zM43.3 85.9h1.9v1.9h-1.9zM49.3 85.9h1.9v1.9h-1.9zM52.4 85.9h1.9v1.9h-1.9zM58.5 85.9h1.9v1.9h-1.9zM67.6 85.9h1.9v1.9h-1.9zM70.7 85.9h1.9v1.9h-1.9zM89.0 85.9h1.9v1.9h-1.9zM98.1 85.9h1.9v1.9h-1.9zM25.0 89.0h1.9v1.9h-1.9zM28.0 89.0h1.9v1.9h-1.9zM34.1 89.0h1.9v1.9h-1.9zM37.2 89.0h1.9v1.9h-1.9zM40.2 89.0h1.9v1.9h-1.9zM43.3 89.0h1.9v1.9h-1.9zM61.5 89.0h1.9v1.9h-1.9zM64.6 89.0h1.9v1.9h-1.9zM73.7 89.0h1.9v1.9h-1.9zM79.8 89.0h1.9v1.9h-1.9zM82.9 89.0h1.9v1.9h-1.9zM85.9 89.0h1.9v1.9h-1.9zM89.0 89.0h1.9v1.9h-1.9zM92.0 89.0h1.9v1.9h-1.9zM95.1 89.0h1.9v1.9h-1.9zM98.1 89.0h1.9v1.9h-1.9zM28.0 92.0h1.9v1.9h-1.9zM34.1 92.0h1.9v1.9h-1.9zM37.2 92.0h1.9v1.9h-1.9zM46.3 92.0h1.9v1.9h-1.9zM49.3 92.0h1.9v1.9h-1.9zM55.4 92.0h1.9v1.9h-1.9zM61.5 92.0h1.9v1.9h-1.9zM64.6 92.0h1.9v1.9h-1.9zM70.7 92.0h1.9v1.9h-1.9zM73.7 92.0h1.9v1.9h-1.9zM82.9 92.0h1.9v1.9h-1.9zM85.9 92.0h1.9v1.9h-1.9zM89.0 92.0h1.9v1.9h-1.9zM95.1 92.0h1.9v1.9h-1.9zM28.0 95.1h1.9v1.9h-1.9zM31.1 95.1h1.9v1.9h-1.9zM40.2 95.1h1.9v1.9h-1.9zM46.3 95.1h1.9v1.9h-1.9zM49.3 95.1h1.9v1.9h-1.9zM52.4 95.1h1.9v1.9h-1.9zM67.6 95.1h1.9v1.9h-1.9zM70.7 95.1h1.9v1.9h-1.9zM82.9 95.1h1.9v1.9h-1.9zM85.9 95.1h1.9v1.9h-1.9zM89.0 95.1h1.9v1.9h-1.9zM98.1 95.1h1.9v1.9h-1.9zM40.2 98.1h1.9v1.9h-1.9zM43.3 98.1h1.9v1.9h-1.9zM46.3 98.1h1.9v1.9h-1.9zM52.4 98.1h1.9v1.9h-1.9zM55.4 98.1h1.9v1.9h-1.9zM61.5 98.1h1.9v1.9h-1.9zM64.6 98.1h1.9v1.9h-1.9zM67.6 98.1h1.9v1.9h-1.9zM73.7 98.1h1.9v1.9h-1.9zM85.9 98.1h1.9v1.9h-1.9zM89.0 98.1h1.9v1.9h-1.9zM92.0 98.1h1.9v1.9h-1.9z" fill="#111"/><rect x="40" y="39" width="21.500" height="22" rx="3.500" fill="#ffa200"/></svg>
<div class="t" style="left:1389px;top:171px;width:22px;text-align:center;font-size:8.500px;font-weight:bold;line-height:12px;height:12px;color:#fff;letter-spacing:-.5px">捷配</div>
<div class="t" style="left:1465px;top:126.300px;font-size:16.600px;color:#333">专属<span style="letter-spacing:-.8px">PCB</span>客服</div>
<div class="t" style="left:1465px;top:149.300px;font-size:16.600px;color:#333">李建青</div>
<div class="t" style="left:1465px;top:207.300px;font-size:16.600px;color:#aaa">微信扫码咨询</div>

<!-- ========== CARD2 ========== -->
<div class="t" style="left:312.500px;top:322.200px;font-size:19px;font-weight:bold;color:#222">我的订单动态</div>
<div class="t g" style="left:1682px;top:320px;font-size:16.400px">更多订单 &gt;</div>
<div class="inp" style="left:313px;width:237px;letter-spacing:.45px;padding-left:9.500px">订单包号/子订单号/生产编号</div>
<div class="inp" style="left:562px;width:237px">PCB文件名</div>
<div class="inp" style="left:811px;width:238px">BOM名称</div>
<div class="box" style="left:1061px;top:374px;width:95px;height:36px;border:1px solid #e2e2e2;background:#f5f5f5"></div>
<div class="t" style="left:1061px;top:380px;width:95px;text-align:center;font-size:18px;color:#333;letter-spacing:3px;text-indent:3px">查询</div>
<div class="box" style="left:313px;top:433px;width:1449px;height:48px;background:#f5f5f5;border:1px solid #e7e7e7"></div>
<div class="th" style="left:337px">订单包</div>
<div class="th" style="left:429px">订单编号</div>
<div class="th" style="left:632px">数量</div>
<div class="th" style="left:733px">相关文件</div>
<div class="th" style="left:1016px">生产基地</div>
<div class="th" style="left:1138px">交期</div>
<div class="th" style="left:1225px">价格</div>
<div class="th" style="left:1370px">付款时间</div>
<div class="th" style="left:1515px">订单状态</div>
<div class="th" style="left:1672px">操作</div>
<!-- order group -->
<div class="box" style="left:313px;top:505px;width:1449px;height:344px;border:1px solid #e8e8e8;border-bottom:0"></div>
<div class="box" style="left:313px;top:505px;width:1449px;height:48px;background:#f5f5f5;border:1px solid #e8e8e8"></div>
<div class="box" style="left:314px;top:762px;width:1447px;height:1px;background:#e8e8e8"></div>
<div class="t f16" style="left:337px;top:518px;color:#333">订单包: <u style="color:#222;letter-spacing:.2px">G2865182</u></div>
<svg class="abs" style="left:478px;top:521.200px" width="20" height="20" viewBox="0 0 20 20"><rect x="4.300" y="1" width="14" height="14" rx="2.600" fill="none" stroke="#9e9e9e" stroke-width="1.300"/><rect x="1.200" y="4.400" width="13.600" height="13.600" rx="2.800" fill="#fff" stroke="#a9a9a9" stroke-width="2"/><path d="M4.200 7.800h7.600M4.200 13.400h7.600M4.200 15.500h3.800" stroke="#a6a6a6" stroke-width="1.100"/><rect x="4.200" y="8.600" width="7.600" height="3.200" fill="#b9b9b9"/></svg>
<div class="t g" style="left:510.500px;top:518px;font-size:16.400px;letter-spacing:.6px">2023-08-21 13:35:40</div>
<svg class="abs" style="left:1472px;top:521px" width="21" height="21" viewBox="0 0 21 21"><circle cx="10.500" cy="10.500" r="9.800" fill="#a9a9a9"/><path d="M16 8.600H5.500l3-2.700M5 12.600h10.500l-3 2.700" fill="none" stroke="#fff" stroke-width="1.600" stroke-linejoin="round"/></svg>
<div class="t" style="left:1496.800px;top:518.300px;font-size:16.500px;color:#666">切换订单归属</div>
<svg class="abs" style="left:1613px;top:518px" width="19" height="23" viewBox="0 0 19 23"><rect x="1.400" y="1.700" width="16" height="19.800" rx="2" fill="#f3f1f0" stroke="#6a6360" stroke-width="1.900"/><rect x="4.500" y="3.600" width="9.800" height="1.800" fill="#aaa5a2"/><path d="M4.300 9.300h1.400M6.800 9.300h7.700M4.300 13h1.400M6.800 13h7.700M4.300 16.700h1.400M6.800 16.700h7.700" stroke="#8d8682" stroke-width="2"/></svg>
<div class="t" style="left:1637.800px;top:518.300px;font-size:16.500px;color:#111">更改订单归属</div>
<!-- row 1 -->
<svg class="abs" style="left:337px;top:577px" width="48" height="48" viewBox="0 0 48 48"><defs><linearGradient id="pg" x1="1" y1="0" x2="0" y2="1"><stop offset="0" stop-color="#1e9512"/><stop offset=".5" stop-color="#47d02b"/><stop offset="1" stop-color="#1e9512"/></linearGradient></defs><rect width="48" height="48" fill="url(#pg)"/><g fill="none" stroke="#fff" stroke-width="1.100" stroke-opacity=".92"><path d="M13.700 0V4L17.500 8V10M18.400 0V4L21.400 7.500V10M34.800 0V4L31.400 8V10M30.200 0V4L26.800 7.500V10"/><path d="M10 17.500H1.100V48M10 21.900H3.300V48M10 26.700H5.100V48M10 31H6.900V48"/><path d="M38 17.500H48M38 21.900H48M38 26.700H48M38 31H48" stroke-opacity=".75"/><path d="M17.500 38V43.500H20M21.400 38V48M26.800 38V41L25.200 43.500V48M31.400 38V43.500H27"/></g><g fill="#fff"><rect x="16.2" y="8.800" width="2.600" height="5.800"/><rect x="16.2" y="33" width="2.600" height="5.700"/><rect x="20.1" y="8.800" width="2.600" height="5.800"/><rect x="20.1" y="33" width="2.600" height="5.700"/><rect x="25.5" y="8.800" width="2.600" height="5.800"/><rect x="25.5" y="33" width="2.600" height="5.700"/><rect x="30.1" y="8.800" width="2.600" height="5.800"/><rect x="30.1" y="33" width="2.600" height="5.700"/><rect x="9.100" y="16.3" width="5.500" height="2.400"/><rect x="33.800" y="16.3" width="5.300" height="2.400"/><rect x="9.100" y="20.7" width="5.500" height="2.400"/><rect x="33.800" y="20.7" width="5.300" height="2.400"/><rect x="9.100" y="25.5" width="5.500" height="2.400"/><rect x="33.800" y="25.5" width="5.300" height="2.400"/><rect x="9.100" y="29.8" width="5.500" height="2.400"/><rect x="33.800" y="29.8" width="5.300" height="2.400"/></g><rect x="14.200" y="14.200" width="19.800" height="19" rx="1.200" fill="#727272"/><path d="M30.600 16.600h1.800M31.500 15.700v1.800" stroke="#fff" stroke-width=".9"/></svg>
<div class="t f16" style="left:429.500px;top:577px;letter-spacing:.5px"><u>SMTW-380814-219&nbsp;</u></div>
<svg class="abs" style="left:585px;top:580.5px" width="20" height="20" viewBox="0 0 20 20"><rect x="4.300" y="1" width="14" height="14" rx="2.600" fill="none" stroke="#9e9e9e" stroke-width="1.300"/><rect x="1.200" y="4.400" width="13.600" height="13.600" rx="2.800" fill="#fff" stroke="#a9a9a9" stroke-width="2"/><path d="M4.200 7.800h7.600M4.200 13.400h7.600M4.200 15.500h3.800" stroke="#a6a6a6" stroke-width="1.100"/><rect x="4.200" y="8.600" width="7.600" height="3.200" fill="#b9b9b9"/></svg>
<div class="t f16" style="left:429.600px;top:600.300px">双面贴</div>
<svg class="abs" style="left:428px;top:622px" width="31" height="26" viewBox="0 0 31 26"><rect x="5.500" y="1.700" width="24" height="18" fill="#fff" stroke="#b0b0b0" stroke-width="1.400"/><rect x="1" y="5" width="25" height="20" fill="#a6a6a6"/><path d="M3 22.500l7-9 5 5.500 3.500-3.500 5.500 7z" fill="#fff"/><circle cx="18.500" cy="11" r="2.300" fill="#fff"/></svg>
<div class="t f16" style="left:465.500px;top:629.500px"><span style="letter-spacing:-.55px">PCBA</span>照片待上传</div>
<div class="t f16" style="left:633px;top:577px">100 套</div>
<div class="t f16 g" style="left:733.800px;top:577px">PCB文件:</div>
<div class="t f16" style="left:733.800px;top:600px"><u>新建WinRAR压缩文件.rar</u> <u class="br">修</u></div>
<div class="t f16 br" style="left:733.800px;top:623px"><u>改文件</u></div>
<div class="t f16 g" style="left:733.800px;top:646px">BOM清单:</div>
<div class="t f16" style="left:733.800px;top:669px"><u>工作簿1.xlsx</u> <u class="br">修改文件</u></div>
<div class="t f16 g" style="left:733.800px;top:692px">坐标文件:</div>
<div class="t f16" style="left:733.800px;top:715px"><u>周例会资料.rar</u> <u class="br">修改文件</u></div>
<div class="box" style="left:1145px;top:578px;width:47px;height:23px;border-radius:3px;background:#a58352"></div>
<div class="box" style="left:1147.200px;top:580.800px;width:27px;height:17.600px;border-radius:2.800px;background:#fff"></div>
<div class="t" style="left:1147.500px;top:581px;width:27px;text-align:center;font-size:16.500px;line-height:18px;height:18px;color:#a58352">72</div>
<div class="t" style="left:1175px;top:581.500px;width:16px;text-align:center;font-size:16.500px;line-height:18px;height:18px;color:#fff;-webkit-text-stroke:.2px #fff">H</div>
<div class="t f16" style="left:1139px;top:607px;letter-spacing:.85px">08-24</div>
<div class="t f16" style="left:1225.800px;top:577px"><span class="g" style="letter-spacing:-.5px">PCB:</span> 代工</div>
<div class="t f16" style="left:1225.800px;top:600px"><span class="g">BOM:</span> 待报价</div>
<div class="t f16" style="left:1225.800px;top:623px"><span class="g">SMT:</span> ¥ 850.00</div>
<div class="t f16" style="left:1370.500px;top:577px;letter-spacing:1.700px">-/-</div>
<div class="t f16" style="left:1515px;top:577px">审核中</div>
<div class="t f16 br" style="left:1515px;top:600px"><u>生产进度</u></div>
<div class="t f16" style="left:1655.500px;top:577px"><u>订单详情</u></div>
<div class="t f16" style="left:1655.500px;top:600px"><u>订单标签</u></div>
<!-- row 2 -->
<svg class="abs" style="left:337px;top:787px" width="48" height="47" viewBox="0 0 48 47"><path d="M0 0h48v47H2l-2-2z" fill="#2e8b22"/><g fill="none" stroke="#fff" stroke-width="3.300" stroke-linejoin="round"><circle cx="7.700" cy="10.200" r="3.850"/><circle cx="27" cy="9.100" r="3.850"/><circle cx="23.400" cy="36.200" r="3.850"/><path d="M11.300 11.500H15Q16.400 11.500 16.400 10V0"/><path d="M27 13V21.200L35.400 30.300V47"/><path d="M36.900 0V14.500Q36.900 17.500 40 17.500H48"/><path d="M48 25.200H46Q43.500 25.200 43.500 28V47" stroke-width="2.900"/><path d="M0 22.100H9.900L20.800 33.200"/><path d="M0 35.100H9Q11 35.100 11 37.500V47"/></g></svg>
<svg class="abs" style="left:432px;top:788px" width="50" height="24" viewBox="0 0 50 24"><defs><linearGradient id="bpg" x1="0" y1="0" x2="1" y2="0"><stop offset="0" stop-color="#9c9c9c"/><stop offset="1" stop-color="#cfcfcf"/></linearGradient></defs><rect x="12" y="6.500" width="36.500" height="13.500" rx="6.700" fill="url(#bpg)"/><path d="M11.500 1.800l3 6.300 6.700.9-4.900 4.700 1.200 6.800-6-3.300-6 3.300 1.200-6.800L1.800 9l6.700-.9z" fill="#fff" stroke="#b5b5b5" stroke-width="1.400" stroke-linejoin="round"/><path d="M8.300 11.500l2.500 2.600 4.200-4.600" fill="none" stroke="#b5b5b5" stroke-width="1.400"/></svg>
<div class="t" style="left:456px;top:794px;font-size:8.800px;line-height:12px;height:12px;color:#fff;font-weight:bold">标品</div>
<div class="t f16" style="left:484.500px;top:787px;letter-spacing:.4px"><u>&nbsp;J2Y-4445139&nbsp;</u></div>
<svg class="abs" style="left:594px;top:790.5px" width="20" height="20" viewBox="0 0 20 20"><rect x="4.300" y="1" width="14" height="14" rx="2.600" fill="none" stroke="#9e9e9e" stroke-width="1.300"/><rect x="1.200" y="4.400" width="13.600" height="13.600" rx="2.800" fill="#fff" stroke="#a9a9a9" stroke-width="2"/><path d="M4.200 7.800h7.600M4.200 13.400h7.600M4.200 15.500h3.800" stroke="#a6a6a6" stroke-width="1.100"/><rect x="4.200" y="8.600" width="7.600" height="3.200" fill="#b9b9b9"/></svg>
<div class="t f16" style="left:429.700px;top:812.400px">双层板</div>
<div class="t f16" style="left:429.500px;top:835px;letter-spacing:.35px">10cm *10cm</div>
<div class="t f16" style="left:633px;top:787px">5500 set</div>
<div class="t f16" style="left:633px;top:810px">5500 pcs</div>
<div class="t f16" style="left:733.800px;top:787px"><u>新建WinRAR压缩文件.rar</u> <u class="br">修改文件</u></div>
<div class="box" style="left:1145px;top:788px;width:47px;height:22px;border-radius:3px;background:#ff9900"></div>
<div class="box" style="left:1147px;top:790px;width:26.800px;height:18px;border-radius:2.800px;background:#fff"></div>
<div class="t" style="left:1147px;top:790.300px;width:27px;text-align:center;font-size:16.500px;line-height:18px;height:18px;color:#ff9900">48</div>
<div class="t" style="left:1175px;top:790.600px;width:16px;text-align:center;font-size:16.500px;line-height:18px;height:18px;color:#fff;-webkit-text-stroke:.2px #fff">H</div>
<div class="box" style="left:1139px;top:815px;width:62px;height:21px;overflow:hidden"><div class="box" style="left:0;top:0;width:90px;height:21px;border:2.500px solid #ff9900;border-radius:7px"></div>
<svg class="abs" style="left:5px;top:4px" width="15" height="13" viewBox="0 0 15 13"><path d="M5.500 0.500L0.800 7h3L2 12.500 7.600 5.200h-3L6.500 0.500zM12 0.500L7.300 7h3L8.500 12.500 14.100 5.200h-3L13 0.500z" fill="#ff9900" stroke="#ff9900" stroke-width=".9" stroke-linejoin="round"/></svg>
<div class="t" style="left:21px;top:1.500px;font-size:14.300px;font-weight:bold;line-height:18px;height:18px;color:#ff9900;letter-spacing:.2px">特快 三</div></div>
<div class="t f16" style="left:1139px;top:841.300px;letter-spacing:.85px">08-22</div>
<div class="t f16" style="left:1226px;top:787px;letter-spacing:.15px">¥23488.00</div>
<div class="t f16" style="left:1226px;top:810px;letter-spacing:.1px">184.25kg</div>
<div class="t f16" style="left:1370.500px;top:787px;letter-spacing:1.700px">-/-</div>
<div class="t f16" style="left:1515px;top:787px;color:#cc0a1f">问题待确认</div>
<div class="t f16" style="left:1655.500px;top:787px"><u>订单详情</u></div>
<div class="t f16" style="left:1655.500px;top:810px"><u>暂停订单</u></div>
<svg class="abs" style="left:1644px;top:833px" width="16" height="18" viewBox="0 0 16 18"><path d="M8 0.500c1 0 1.600.8 1.600 1.600 2.800.9 4.400 3.400 4.400 6.400v9.500H2V8.500c0-3 1.600-5.500 4.400-6.400C6.400 1.300 7 0.500 8 0.500z" fill="#e00000"/><rect x="7" y="8" width="2" height="8" fill="#fff"/></svg>
<div class="t f16" style="left:1667px;top:833px;color:#e0101c">查看问题</div>
<div class="box" style="left:215px;top:852px;width:1370px;height:10px;box-shadow:0 0 6px rgba(0,0,0,.16)"></div>

</body>
</html>
